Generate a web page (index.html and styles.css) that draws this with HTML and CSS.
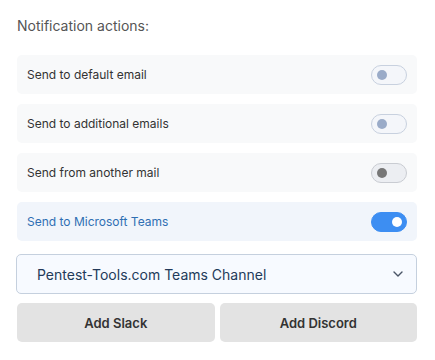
FILE: index.html
```html
<!DOCTYPE html>
<html lang="en">
<head>
    <meta charset="UTF-8">
    <meta name="viewport" content="width=device-width, initial-scale=1.0">
    <title>Notification actions</title>
    <link rel="stylesheet" href="styles.css">
</head>
<body>
    <div class="panel">
        <p class="panel-title">Notification actions:</p>

        <div class="actions">
            <div class="action-row">
                <span>Send to default email</span>
                <span class="toggle toggle-off"><span class="knob"></span></span>
            </div>
            <div class="action-row">
                <span>Send to additional emails</span>
                <span class="toggle toggle-off"><span class="knob"></span></span>
            </div>
            <div class="action-row">
                <span>Send from another mail</span>
                <span class="toggle toggle-disabled"><span class="knob"></span></span>
            </div>
            <div class="action-row action-active">
                <span>Send to Microsoft Teams</span>
                <span class="toggle toggle-on"><span class="knob"></span></span>
            </div>
        </div>

        <div class="select">
            <span>Pentest-Tools.com Teams Channel</span>
            <svg width="12" height="12" viewBox="0 0 12 12" fill="none">
                <path d="M2 4l4 4 4-4" stroke="#4a5566" stroke-width="1.4" stroke-linecap="round" stroke-linejoin="round"/>
            </svg>
        </div>

        <div class="buttons">
            <button type="button">Add Slack</button>
            <button type="button">Add Discord</button>
        </div>
    </div>
</body>
</html>
```

FILE: styles.css
```css
body {
    margin: 0;
    padding: 0;
    background-color: #fff;
    font-family: 'Inter', 'Noto Sans', sans-serif;
    color: #333;
}
.panel {
    padding: 16px 18px 0 17px;
}
.panel-title {
    margin: 0 0 19px;
    font-size: 14px;
    line-height: 20px;
    color: #555;
}
.actions {
    display: flex;
    flex-direction: column;
    gap: 10px;
}
.action-row {
    display: flex;
    align-items: center;
    justify-content: space-between;
    height: 39px;
    padding: 0 10px 0 10px;
    background-color: #f8f9fa;
    border-radius: 5px;
    font-size: 12px;
    color: #333;
}
.action-active {
    background-color: #f1f5fb;
    color: #2f6fb3;
}
.toggle {
    position: relative;
    display: inline-block;
    width: 34px;
    height: 18px;
    border-radius: 10px;
    border: 1px solid #c8d1df;
    background-color: #f4f6fa;
}
.toggle .knob {
    position: absolute;
    top: 4px;
    left: 5px;
    width: 10px;
    height: 10px;
    border-radius: 50%;
    background-color: #9aabc8;
}
.toggle-disabled {
    border-color: #c9ccd2;
    background-color: #eceef2;
}
.toggle-disabled .knob {
    background-color: #777;
}
.toggle-on {
    border-color: #3d8ef2;
    background-color: #3d8ef2;
}
.toggle-on .knob {
    left: auto;
    right: 4px;
    background-color: #fff;
}
.select {
    display: flex;
    align-items: center;
    justify-content: space-between;
    height: 38px;
    margin-top: 13px;
    margin-left: -1px;
    padding: 0 12px 0 20px;
    border: 1px solid #c5d0de;
    border-radius: 5px;
    background-color: #f7faff;
    font-size: 14px;
    color: #233a5a;
}
.buttons {
    display: grid;
    grid-template-columns: 1fr 1fr;
    gap: 5px;
    margin-top: 9px;
}
.buttons button {
    height: 39px;
    border: none;
    border-radius: 5px;
    background-color: #e3e3e3;
    font-family: inherit;
    font-size: 13px;
    font-weight: 600;
    color: #333;
}
```
